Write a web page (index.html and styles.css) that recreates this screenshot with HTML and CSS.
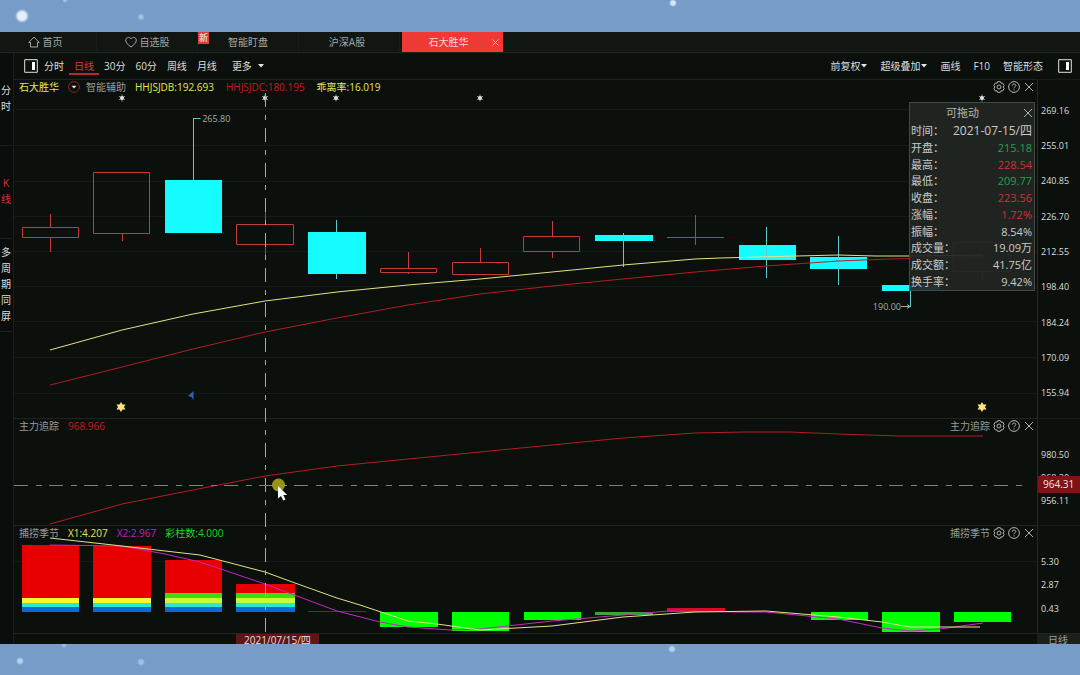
FILE: index.html
```html
<!DOCTYPE html>
<html lang="zh-CN">
<head>
<meta charset="utf-8">
<title>石大胜华</title>
<link rel="stylesheet" href="styles.css">
</head>
<body>
<svg class="defs" aria-hidden="true">
  <symbol id="gear" viewBox="0 0 12 12"><path d="M4.6.7h2.8l.6 1.5 1.6-.2 1.5 2.4-1 1.6 1 1.6-1.5 2.4-1.6-.2-.6 1.5H4.600l-.6-1.500-1.600.2L.9 7.600l1-1.600-1-1.600L2.400 2 4 2.200z"/><circle cx="6" cy="6" r="2"/></symbol>
  <symbol id="help" viewBox="0 0 12 12"><circle cx="6" cy="6" r="5.400"/><path d="M4.300 4.700c0-2.300 3.500-2.200 3.500-.1C7.800 5.800 6 5.900 6 7.300M6 8.400v1"/></symbol>
  <symbol id="close" viewBox="0 0 12 12"><path d="M2 2l8 8M10 2l-8 8"/></symbol>
  <symbol id="side" viewBox="0 0 14 14"><path d="M.7.7h12.600v12.600H.7z"/><path d="M8 3h3v8H8z" fill="#fff" stroke="none"/></symbol>
  <symbol id="caret" viewBox="0 0 6 4"><path d="M0 0h6L3 3.500z" fill="#e4e6e4" stroke="none"/></symbol>
  <symbol id="spark" viewBox="-5 -5 10 10"><path d="M0-3.500v7M-3-1.800l6 3.600M3-1.800l-6 3.600" stroke="#8d918e"/><circle r="2" fill="#e2e4e2" stroke="none"/></symbol>
  <symbol id="star" viewBox="-6 -6 12 12"><path d="M0-5l1.500 2.500h3L3 0l1.500 2.500h-3L0 5l-1.500-2.500h-3L-3 0l-1.500-2.500h3z" fill="#ffe08a" stroke="none"/></symbol>
</svg>

<main class="app">
  <nav class="tabs">
    <a class="tab tab-home" href="#"><svg class="icon-l" viewBox="0 0 12 12"><path d="M.8 6.500L6 1l5.200 5.500H9.500V11h-7V6.500z"/></svg>首页</a>
    <a class="tab" href="#"><svg class="icon-l" viewBox="0 0 12 12"><path d="M6 11C3 8.700.7 6.900.7 4.200.7 1.200 4.500.4 6 3c1.500-2.600 5.300-1.800 5.300 1.200C11.300 6.900 9 8.700 6 11z"/></svg>自选股</a>
    <a class="tab" href="#"><span class="new">新</span>智能盯盘</a>
    <a class="tab tab-market" href="#">沪深A股</a>
    <div class="tab tab-on"><a href="#">石大胜华</a><button class="tab-x" aria-label="关闭"><svg class="icon-s" viewBox="0 0 12 12"><use href="#close"/></svg></button></div>
  </nav>

  <div class="work">
    <aside class="side">
      <button>分时</button>
      <button class="hot">K线</button>
      <button>多周期同屏</button>
    </aside>

    <section class="main">
      <div class="toolbar">
        <button class="panel-btn" aria-label="左侧栏"><svg class="icon-xl"><use href="#side"/></svg></button>
        <div class="periods">
          <button>分时</button>
          <button class="on">日线</button>
          <button>30分</button>
          <button>60分</button>
          <button>周线</button>
          <button>月线</button>
          <button class="more">更多<svg class="caret"><use href="#caret"/></svg></button>
        </div>
        <div class="tools">
          <button>前复权<svg class="caret"><use href="#caret"/></svg></button>
          <button>超级叠加<svg class="caret"><use href="#caret"/></svg></button>
          <button>画线</button>
          <button>F10</button>
          <button>智能形态</button>
          <button class="panel-btn" aria-label="右侧栏"><svg class="icon-xl"><use href="#side"/></svg></button>
        </div>
      </div>

      <div class="charts">
        <section class="panel">
          <div class="plot">
            <svg class="draw" viewBox="14 79 1023 339" preserveAspectRatio="none">
              <path class="grid" d="M14 109.500H1037M14 145.500H1037M14 181.500H1037M14 216.500H1037M14 251.500H1037M14 286.500H1037M14 321.500H1037M14 357.500H1037M14 393.500H1037"/>
              <g class="up">
                <path d="M22.500 227.500h56v10h-56zM50.500 214v13M50.500 238v14"/>
                <path d="M93.500 172.500h56v61h-56zM122.500 233v8"/>
                <path d="M236.500 224.500h57v20h-57zM265.500 212v12M265.500 245v13"/>
                <path d="M380.500 268.500h56v4h-56zM408.500 252v16M408.500 273v1"/>
                <path d="M452.500 262.500h56v12h-56zM480.500 248v14"/>
                <path d="M523.500 236.500h56v15h-56zM552.500 221v15M552.500 252v6"/>
                <path d="M667 237.500h57M695.500 215v30"/>
                <path d="M953.500 242.500h57v29h-57zM982.500 272v8"/>
              </g>
              <g class="down">
                <path d="M165 180h57v53h-57zM308 232h58v42h-58zM595 235h58v6h-58zM739 245h57v15h-57zM810 257h57v12h-57zM882 285h58v6h-58z"/>
                <path class="wick" d="M193.500 118v62M193.500 118.500h7M336.500 220v12M336.500 273v6M623.500 233v34M766.500 227v51M838.500 236v49M910.500 285v22"/>
              </g>
              <path class="tag-line" d="M901 306.500h9M907 304.500l3 2-3 2"/>
              <polyline class="yellow" points="50,350 122,330 193,314 265,301 337,292 408,285 480,279 552,272 623,265 695,259 720,258 797,256 838,255 875,256 910,256 983,255"/>
              <polyline class="red" points="50,385 122,367 193,349 265,332 337,318 408,305 480,294 552,286 623,279 695,272 766,266 838,261 890,259 983,257"/>
              <g fill="none">
                <use href="#spark" x="117" y="93" width="10" height="10"/><use href="#spark" x="260" y="93" width="10" height="10"/><use href="#spark" x="331" y="93" width="10" height="10"/><use href="#spark" x="475" y="93" width="10" height="10"/><use href="#spark" x="977" y="93" width="10" height="10"/>
                <use href="#star" x="115" y="401" width="12" height="12"/><use href="#star" x="976" y="401" width="12" height="12"/>
              </g>
              <path d="M188 396l5.500-5v9l-2-3z" fill="#2c62c4"/>
            </svg>
            <header class="legend">
              <span class="c-yellow">石大胜华</span>
              <button class="drop" aria-label="切换"><svg class="icon-m" viewBox="0 0 12 12"><circle cx="6" cy="6" r="5.400" stroke="#8c2326"/><path d="M3.500 4.800h5L6 7.600z" fill="#e8e8e8" stroke="none"/></svg></button>
              <span class="c-grey">智能辅助</span>
              <div class="values">
                <span class="c-yellow">HHJSJDB:192.693</span>
                <span class="c-dark">HHJSJDC:180.195</span>
                <span class="c-yellow">乖离率:16.019</span>
              </div>
              <div class="acts"><button aria-label="设置"><svg class="icon-m"><use href="#gear"/></svg></button><button aria-label="帮助"><svg class="icon-m"><use href="#help"/></svg></button><button aria-label="关闭"><svg class="icon-m"><use href="#close"/></svg></button></div>
            </header>
            <span class="tag tag-high">265.80</span>
            <span class="tag tag-low">190.00</span>
          </div>
          <div class="axis axis-price"><span>269.16</span><span>255.01</span><span>240.85</span><span>226.70</span><span>212.55</span><span>198.40</span><span>184.24</span><span>170.09</span><span>155.94</span></div>
        </section>

        <section class="panel">
          <div class="plot">
            <svg class="draw" viewBox="14 418 1023 107" preserveAspectRatio="none">
              <polyline class="red" points="50,524 122,504 193,490 265,476 337,466 408,459 490,451 552,445 623,438 695,433 745,432 790,432 838,434 900,436 983,436"/>
            </svg>
            <header class="legend">
              <span class="c-grey">主力追踪</span>
              <span class="c-dark">968.966</span>
              <div class="acts"><span class="c-grey">主力追踪</span><button aria-label="设置"><svg class="icon-m"><use href="#gear"/></svg></button><button aria-label="帮助"><svg class="icon-m"><use href="#help"/></svg></button><button aria-label="关闭"><svg class="icon-m"><use href="#close"/></svg></button></div>
            </header>
          </div>
          <div class="axis axis-sub"><span>980.50</span><span>968.30</span><span>956.11</span><b class="mark">964.31</b></div>
        </section>

        <section class="panel">
          <div class="plot">
            <svg class="draw" viewBox="14 525 1023 108" preserveAspectRatio="none">
              <path class="grid" d="M14 561.500H1037"/>
              <path fill="#e60000" d="M22 545h57v53H22zM93 546h58v52H93zM165 560h57v33h-57zM236 584h59v9h-59z"/>
              <path fill="#45d80c" d="M165 593h57v5h-57zM236 593h59v5h-59z"/>
              <path fill="#f4f82c" d="M22 598h57v5H22zM93 598h58v5H93z"/>
              <path fill="#c8fa3c" d="M165 598h57v5h-57zM236 598h59v5h-59z"/>
              <path fill="#2ce8d0" d="M22 603h57v4H22zM93 603h58v4H93zM165 603h57v4h-57zM236 603h59v4h-59z"/>
              <path fill="#0a6ad4" d="M22 607h57v5H22zM93 607h58v5H93zM165 607h57v5h-57zM236 607h59v5h-59z"/>
              <path fill="#a80a28" d="M308 611h58v1h-58z"/>
              <path fill="#00ff00" d="M380 612h58v15h-58zM452 612h57v19h-57zM524 612h57v8h-57zM811 612h57v8h-57zM882 612h58v20h-58zM954 612h57v10h-57z"/>
              <path fill="#3aa63a" d="M595 612h58v3h-58z"/>
              <path fill="#d80c26" d="M667 608h58v4h-58z"/>
              <polyline class="magenta" points="50,545 122,546 165,554 200,562 265,584 337,611 380,622 408,627 450,630 480,629 552,621 623,615 668,611 740,612 766,612 838,619 882,628 910,631 940,629 983,623"/>
              <polyline class="yellow" points="50,538 122,546 200,555 265,572 295,583 337,598 360,605 408,621 437,624 480,630 552,626 623,617 695,612 766,611 838,617 882,622 910,627 980,627"/>
            </svg>
            <header class="legend">
              <span class="c-grey">捕捞季节</span>
              <span class="c-yellow">X1:4.207</span>
              <span class="c-magenta">X2:2.967</span>
              <span class="c-green">彩柱数:4.000</span>
              <div class="acts"><span class="c-grey">捕捞季节</span><button aria-label="设置"><svg class="icon-m"><use href="#gear"/></svg></button><button aria-label="帮助"><svg class="icon-m"><use href="#help"/></svg></button><button aria-label="关闭"><svg class="icon-m"><use href="#close"/></svg></button></div>
            </header>
          </div>
          <div class="axis axis-sub"><span>5.30</span><span>2.87</span><span>0.43</span></div>
        </section>

        <footer class="dates"><div class="track"><time class="date" datetime="2021-07-15">2021/07/15/四</time></div><span class="unit">日线</span></footer>

        <svg class="cross" viewBox="14 79 1066 565" preserveAspectRatio="none">
          <path class="cross-v" d="M265.500 93V633"/>
          <path class="cross-h" d="M14 485.500H1029"/>
          <circle cx="278.500" cy="485" r="6.500" fill="#a5a11c" opacity=".9"/>
          <path d="M278 486v12.500l3-2.500 2.300 4.500 2.200-1-2.300-4.500h4z" fill="#fff"/>
        </svg>

        <section class="info">
          <div class="info-head"><h2>可拖动</h2><button aria-label="关闭"><svg class="icon-m"><use href="#close"/></svg></button></div>
          <dl>
            <div><dt>时间：</dt><dd class="day">2021-07-15/四</dd></div>
            <div><dt>开盘：</dt><dd class="fall">215.18</dd></div>
            <div><dt>最高：</dt><dd class="rise">228.54</dd></div>
            <div><dt>最低：</dt><dd class="fall">209.77</dd></div>
            <div><dt>收盘：</dt><dd class="rise">223.56</dd></div>
            <div><dt>涨幅：</dt><dd class="rise">1.72%</dd></div>
            <div><dt>振幅：</dt><dd>8.54%</dd></div>
            <div><dt>成交量：</dt><dd>19.09万</dd></div>
            <div><dt>成交额：</dt><dd>41.75亿</dd></div>
            <div><dt>换手率：</dt><dd>9.42%</dd></div>
          </dl>
        </section>
      </div>
    </section>
  </div>
</main>
</body>
</html>
```

FILE: styles.css
```css
* { box-sizing: border-box; }

body {
  margin: 0;
  height: 100vh;
  padding: 32px 0 31px;
  font: 10px/16px "Open Sans", "Noto Sans CJK SC", sans-serif;
  color: #dcdfdc;
  background:
    radial-gradient(circle at 22px 16px, #e4f0fc 4px, transparent 7px),
    radial-gradient(circle at 141px 17px, #a4c4e6 1px, transparent 4px),
    radial-gradient(circle at 65px 0, #a4c4e6 1px, transparent 3px),
    radial-gradient(circle at 673px 3px, #d4e6f8 2px, transparent 4px),
    radial-gradient(circle at 20px 661px, #b4d0ec 2px, transparent 4px),
    radial-gradient(circle at 141px 662px, #a0c0e4 2px, transparent 4px),
    radial-gradient(circle at 64px 645px, #a0c0e4 1px, transparent 3px),
    radial-gradient(circle at 672px 649px, #b4d0ec 2px, transparent 4px),
    #789cc8;
}

button {
  margin: 0;
  padding: 0;
  border: 0;
  background: none;
  font: inherit;
  color: inherit;
  display: flex;
  align-items: center;
  justify-content: center;
}

a { color: inherit; text-decoration: none; }

svg { fill: none; stroke: currentColor; flex: none; display: block; }
.defs { position: absolute; width: 0; height: 0; }
.icon-s { width: 9px; height: 9px; }
.icon-m, .icon-l { width: 12px; height: 12px; }
.icon-xl { width: 14px; height: 14px; }
.caret { width: 6px; height: 4px; }

.app {
  height: 100%;
  display: flex;
  flex-direction: column;
  background: #0b100d;
  overflow: hidden;
}

/* Top tabs */
.tabs {
  flex: none;
  height: 21px;
  display: flex;
  background: #121613;
  border-bottom: 1px solid #202622;
  color: #a3a6a3;
}
.tab {
  position: relative;
  width: 101px;
  display: flex;
  align-items: center;
  justify-content: center;
  gap: 3px;
  border-right: 1px solid #181c19;
}
.tab-home { width: 97px; padding-right: 6px; }
.tab-market { padding-right: 4px; }
.new {
  position: absolute;
  left: 0;
  top: 0;
  width: 11px;
  line-height: 12px;
  text-align: center;
  font-size: 9px;
  color: #fff;
  background: #dc3c3c;
}
.tab-on { background: #ee3935; color: #ffd9d6; border: 0; margin-left: 2px; padding-right: 8px; }
.tab-x { position: absolute; right: 3px; top: 6px; }

.work { flex: 1; min-height: 0; display: flex; }

/* Left rail */
.side { flex: none; width: 14px; border-right: 1px solid #1a1f1c; background: #0a0d0b; }
.side button {
  width: 12px;
  height: 93px;
  padding-bottom: 2px;
  word-break: break-all;
  border-bottom: 1px solid #1a1f1c;
}
.side .hot { color: #dc3434; }

.main { flex: 1; min-width: 0; display: flex; flex-direction: column; }

/* Toolbar */
.toolbar {
  flex: none;
  height: 26px;
  padding: 0 8px 0 10px;
  display: flex;
  align-items: center;
  gap: 6px;
}
.panel-btn { color: #e0e2e0; }
.periods, .tools { display: flex; height: 26px; }
.periods { gap: 10px; }
.periods .on { color: #e03434; position: relative; }
.periods .on::after {
  content: "";
  position: absolute;
  left: -5px;
  right: -5px;
  bottom: 4px;
  height: 2px;
  background: #b42e2e;
}
.more { gap: 6px; margin-left: 5px; }
.tools { margin-left: auto; gap: 13px; }
.tools button { gap: 1px; }
.tools .panel-btn { margin-left: 2px; }

/* Chart stack */
.charts {
  position: relative;
  flex: 1;
  min-height: 0;
  display: grid;
  grid-template-rows: minmax(0, 339fr) minmax(0, 107fr) minmax(0, 108fr) 11px;
}
.panel { display: grid; grid-template-columns: minmax(0, 1fr) 43px; grid-template-rows: minmax(0, 1fr); }
.plot { position: relative; display: grid; grid-template: minmax(0, 1fr) / minmax(0, 1fr); box-shadow: inset 0 1px #1e2420; }
.draw { grid-area: 1 / 1; width: 100%; height: 100%; overflow: hidden; stroke: none; }
.draw path, .draw polyline { vector-effect: non-scaling-stroke; }
.grid { stroke: #151a17; }
.up { stroke: #c43a38; }
.down { fill: #14fcff; }
.wick { stroke: #5ccccc; fill: none; }
.tag-line { stroke: #a8aca8; }
.yellow { stroke: #e2e286; }
.red { stroke: #b41c24; }
.magenta { stroke: #c428c4; }

.legend {
  grid-area: 1 / 1;
  align-self: start;
  position: relative;
  height: 16px;
  padding: 0 2px 0 5px;
  display: flex;
  align-items: center;
  gap: 9px;
}
.drop { margin-right: -3px; }
.values { display: flex; gap: 12px; }
.acts { margin-left: auto; display: flex; align-items: center; gap: 3px; color: #b0b4b0; }
.c-yellow { color: #e6e65a; }
.c-grey { color: #989c99; }
.c-dark { color: #c41a1e; }
.c-magenta { color: #c41cc4; }
.c-green { color: #1ed428; }

.tag { position: absolute; font-size: 9px; line-height: 12px; color: #a8aca8; }
.tag-high { left: 18.4%; top: 10%; }
.tag-low { right: 13.3%; top: 65.5%; }

.axis {
  position: relative;
  display: grid;
  grid-auto-rows: 1fr;
  align-items: center;
  padding-left: 3px;
  font-size: 9px;
  border-left: 1px solid #242a26;
  border-top: 1px solid #161b18;
}
.axis-price { padding-top: 13px; padding-bottom: 7px; }
.axis-sub { padding-top: 24px; padding-bottom: 12px; }
.mark {
  position: absolute;
  left: 0;
  right: 0;
  top: 57px;
  padding-left: 5px;
  font-size: 10px;
  font-weight: 400;
  line-height: 17px;
  color: #ffe0dc;
  background: #7c1418;
}

.dates {
  display: grid;
  grid-template-columns: minmax(0, 1fr) 43px;
  overflow: hidden;
  border-top: 1px solid #1e2420;
  line-height: 13px;
}
.date {
  display: block;
  width: 83px;
  margin-left: 21.7%;
  text-align: center;
  color: #f0dcda;
  background: #5e1619;
}
.unit { padding-left: 11px; color: #989c99; background: #1c201d; }

.cross { position: absolute; inset: 0; width: 100%; height: 100%; stroke: none; pointer-events: none; }
.cross-v { stroke: #a8aca8; stroke-dasharray: 14 8 5 8; }
.cross-h { stroke: #7c827c; stroke-dasharray: 14 8 6 7; }

/* Floating quote card */
.info {
  position: absolute;
  right: 45px;
  top: 23px;
  width: 126px;
  font-size: 11px;
  color: #c8cbc8;
  background: #222523ee;
  border: 1px solid #454946;
}
.info-head { height: 20px; display: grid; grid-template-columns: 1fr auto; align-items: center; color: #b0b4b0; }
.info-head h2 { margin: 0; padding-right: 7px; font: inherit; text-align: center; }
.info dl { margin: 0; padding: 0 2px 0 1px; height: 167px; display: grid; grid-auto-rows: 1fr; }
.info dl div { display: flex; align-items: center; justify-content: space-between; }
.info dt, .info dd { margin: 0; }
.info .day { font-size: 12px; }
.info .rise { color: #d03034; }
.info .fall { color: #20a04c; }
```
